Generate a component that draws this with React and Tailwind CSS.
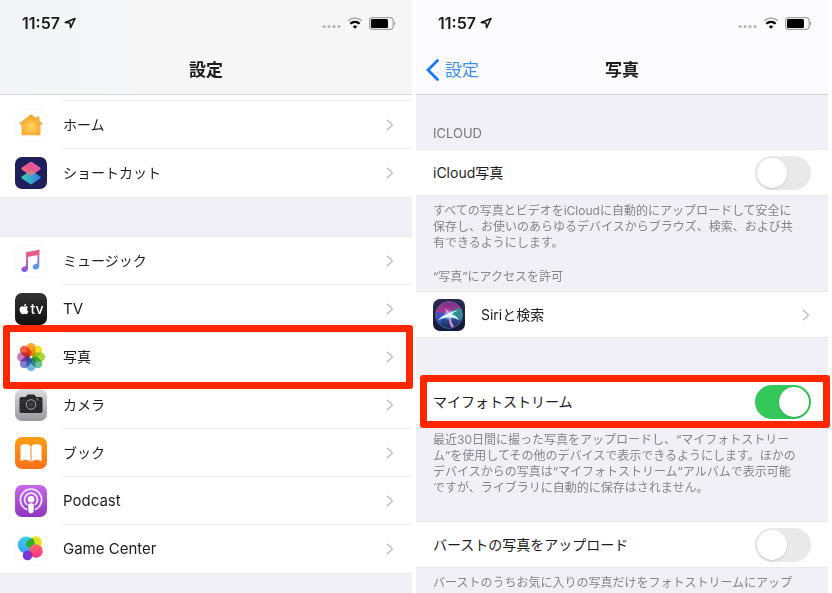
import { FaApple } from 'react-icons/fa'
import clsx from 'clsx'

function HomeIcon() {
  return (
    <svg viewBox="0 0 32 32" className="size-8">
      <defs>
        <radialGradient id="home" cx="50%" cy="60%" r="55%">
          <stop offset="0" stopColor="#ffd75e" />
          <stop offset="1" stopColor="#f99d2b" />
        </radialGradient>
      </defs>
      <rect x=".5" y=".5" width="31" height="31" rx="7" fill="#fefefe" stroke="#f8f8f8" />
      <path
        d="M16 5.200 21.600 9.600V8.200c0-.5.3-.8.8-.8h1.200c.5 0 .8.3.8.8v3.700l2.800 2.200c.7.6.4 1.300-.4 1.300h-1.300v9.300c0 1-.6 1.600-1.600 1.600H8.100c-1 0-1.600-.6-1.600-1.600v-9.300H5.200c-.8 0-1.100-.7-.4-1.300z"
        fill="url(#home)"
      />
    </svg>
  )
}

function ShortcutsIcon() {
  return (
    <svg viewBox="0 0 32 32" className="size-8">
      <defs>
        <linearGradient id="scTop" x1="1" y1="0" x2="0" y2="1">
          <stop offset="0" stopColor="#d85adf" />
          <stop offset=".5" stopColor="#ea5585" />
          <stop offset="1" stopColor="#f07a78" />
        </linearGradient>
        <linearGradient id="scBottom" x1="0" y1="0" x2="1" y2="0">
          <stop offset="0" stopColor="#3fd0b4" />
          <stop offset="1" stopColor="#2c7de8" />
        </linearGradient>
      </defs>
      <rect width="32" height="32" rx="7" fill="#1f1f5c" />
      <path
        d="M7 19.600c-.9.5-.9 1.300 0 1.800l7.600 5.400c1 .7 1.900.7 2.800 0l7.600-5.400c.9-.5.9-1.300 0-1.800L18 14.600c-1.200-.8-2.800-.8-4 0z"
        fill="url(#scBottom)"
      />
      <path
        d="M14.600 5.200 7 10.600c-.9.5-.9 1.500 0 2.100l7.600 5.400c1 .7 1.900.7 2.800 0l7.600-5.400c.9-.6.9-1.600 0-2.100l-7.600-5.400c-.9-.7-1.800-.7-2.800 0z"
        fill="url(#scTop)"
      />
      <path d="m16 13.600 5 2-3.600 2.500c-.9.6-1.900.6-2.800 0L11 15.600z" fill="#a99aa0" opacity=".6" />
    </svg>
  )
}

function MusicIcon() {
  return (
    <svg viewBox="0 0 32 32" className="size-8">
      <defs>
        <linearGradient id="music" x1="0" y1="0" x2="0" y2="1">
          <stop offset="0" stopColor="#f9567c" />
          <stop offset=".35" stopColor="#d85ba6" />
          <stop offset="1" stopColor="#7d55ea" />
        </linearGradient>
        <linearGradient id="musicRight" x1="0" y1="0" x2="0" y2="1">
          <stop offset="0" stopColor="#f9567c" />
          <stop offset=".5" stopColor="#9d79d8" />
          <stop offset="1" stopColor="#3fa4ee" />
        </linearGradient>
      </defs>
      <rect x=".5" y=".5" width="31" height="31" rx="7" fill="#fefefe" stroke="#f7f7f7" />
      <path d="M11.100 7.200 24.300 4.700v5L11.100 12.200z" fill="#ea5a86" />
      <path
        d="M11.100 7.200h1.900V23c0 2.600-1.500 3.900-3.600 3.900-1.900 0-3-1-3-2.500 0-1.700 1.300-2.500 3-2.800 1.300-.2 1.700-.5 1.700-1.500z"
        fill="url(#music)"
      />
      <path
        d="M22.400 5.100l1.900-.4v15.800c0 2.600-1.500 3.900-3.600 3.900-1.900 0-3-1-3-2.500 0-1.700 1.300-2.500 3-2.800 1.300-.2 1.700-.5 1.700-1.500z"
        fill="url(#musicRight)"
      />
    </svg>
  )
}

function TvIcon() {
  return (
    <span className="flex size-8 items-center justify-center rounded-[7px] bg-linear-to-b from-[#333] to-[#111] text-white">
      <FaApple className="size-3" />
      <span className="text-sm leading-4 font-medium">tv</span>
    </span>
  )
}

const petals = ['#fba62a', '#f2e02a', '#a5d83c', '#66c490', '#72b4e0', '#8480cc', '#c87cc0', '#f4604c']

function PhotosIcon() {
  return (
    <svg viewBox="0 0 32 32" className="size-8">
      <rect width="32" height="32" rx="7" fill="#fff" />
      {petals.map((color, i) => (
        <rect
          key={color}
          x="11.500"
          y="2"
          width="9"
          height="13"
          rx="4.500"
          fill={color}
          transform={`rotate(${i * 45} 16 16)`}
          className="mix-blend-multiply"
        />
      ))}
    </svg>
  )
}

function CameraIcon() {
  return (
    <svg viewBox="0 0 32 32" className="size-8">
      <defs>
        <linearGradient id="camera" x1="0" y1="0" x2="0" y2="1">
          <stop offset="0" stopColor="#dcdcde" />
          <stop offset="1" stopColor="#98989e" />
        </linearGradient>
      </defs>
      <rect width="32" height="32" rx="7" fill="url(#camera)" />
      <path
        d="M6.500 8h4.300l1.400-1.900c.3-.4.7-.6 1.200-.6h5.200c.5 0 .9.2 1.200.6L21.200 8h4.300c1.300 0 2 .8 2 2v12c0 1.200-.8 2-2 2h-19c-1.300 0-2-.8-2-2V10c0-1.200.7-2 2-2z"
        fill="#2b2b2e"
      />
      <path d="M4.500 11.500h23" stroke="#4a4a4d" strokeWidth=".6" />
      <circle cx="16" cy="15.500" r="6" fill="#2b2b2e" />
      <circle cx="16" cy="15.500" r="4.800" fill="none" stroke="#a8a8aa" strokeWidth="1" />
      <circle cx="16" cy="15.500" r="2.500" fill="#3d3d40" />
      <circle cx="22.500" cy="10" r=".8" fill="#e3b737" />
    </svg>
  )
}

function BooksIcon() {
  return (
    <svg viewBox="0 0 32 32" className="size-8">
      <defs>
        <linearGradient id="books" x1="0" y1="0" x2="0" y2="1">
          <stop offset="0" stopColor="#fe9f12" />
          <stop offset="1" stopColor="#f8701a" />
        </linearGradient>
      </defs>
      <rect width="32" height="32" rx="7" fill="url(#books)" />
      <path
        d="M15.500 9.200v15.500c-2.600-2.500-6.500-2.800-10-.4V9.900c0-1 .3-1.500 1.100-1.900 3-1.600 6.700-1.300 8.900 1.200zM16.500 9.200v15.500c2.600-2.500 6.500-2.800 10-.4V9.900c0-1-.3-1.500-1.100-1.900-3-1.600-6.700-1.300-8.900 1.200z"
        fill="#fff"
      />
    </svg>
  )
}

function PodcastIcon() {
  return (
    <svg viewBox="0 0 32 32" className="size-8">
      <defs>
        <linearGradient id="podcast" x1="0" y1="0" x2="0" y2="1">
          <stop offset="0" stopColor="#c768e8" />
          <stop offset="1" stopColor="#8f35c0" />
        </linearGradient>
      </defs>
      <rect width="32" height="32" rx="7" fill="url(#podcast)" />
      <g fill="none" stroke="#f5e6fa" strokeWidth="1.800" strokeLinecap="round">
        <path d="M11.500 24.300a10.600 10.600 0 1 1 9 0" />
        <path d="M11.800 19.500a6.500 6.500 0 1 1 8.400 0" />
      </g>
      <circle cx="16" cy="14.300" r="3.300" fill="#fff" />
      <path
        d="M16 18.200c2 0 3 .8 2.900 2.400l-.4 5.800c-.2 1.200-1.100 1.800-2.500 1.800s-2.300-.6-2.500-1.800l-.4-5.800c-.1-1.600.9-2.400 2.900-2.400z"
        fill="#fff"
      />
    </svg>
  )
}

function GameCenterIcon() {
  return (
    <svg viewBox="0 0 32 32" className="size-8">
      <defs>
        <linearGradient id="gcBlue" x1="0" y1="0" x2="0" y2="1">
          <stop offset="0" stopColor="#3fd0e8" />
          <stop offset="1" stopColor="#3a9bf5" />
        </linearGradient>
        <linearGradient id="gcPink" x1="0" y1="0" x2="0" y2="1">
          <stop offset="0" stopColor="#ff6b6b" />
          <stop offset="1" stopColor="#fc2f86" />
        </linearGradient>
      </defs>
      <rect x=".5" y=".5" width="31" height="31" rx="7" fill="#fff" stroke="#f8f8f8" />
      <circle cx="20.500" cy="9.800" r="6.500" fill="#e9e11c" />
      <circle cx="11.200" cy="12" r="8.400" fill="url(#gcBlue)" />
      <path d="M18 5.500c2 3 2.200 6.500.8 9.500-3.500 1.500-7-.5-8-3.500.5-4 4-6.200 7.200-6z" fill="#2fae2f" />
      <circle cx="21" cy="18" r="6.800" fill="url(#gcPink)" />
      <circle cx="12.500" cy="22.500" r="4.800" fill="#7a35d8" />
      <path d="M15.200 18.600a6.800 6.800 0 0 0 2 5.100 4.800 4.800 0 0 0-2-5.100z" fill="#c2185b" />
    </svg>
  )
}

function SiriIcon() {
  return (
    <svg viewBox="0 0 32 32" className="size-8">
      <defs>
        <linearGradient id="siriBg" x1="0" y1="0" x2="0" y2="1">
          <stop offset="0" stopColor="#2b2a4c" />
          <stop offset="1" stopColor="#10183c" />
        </linearGradient>
        <linearGradient id="siriOrb" x1="0" y1="0" x2="0" y2="1">
          <stop offset="0" stopColor="#7a2f86" />
          <stop offset=".4" stopColor="#a8398f" />
          <stop offset=".65" stopColor="#28508f" />
          <stop offset="1" stopColor="#142a5c" />
        </linearGradient>
        <radialGradient id="siriGlow" cx="50%" cy="50%" r="50%">
          <stop offset="0" stopColor="#fff" />
          <stop offset=".3" stopColor="#d6f5ff" stopOpacity=".7" />
          <stop offset="1" stopColor="#6fd8ff" stopOpacity="0" />
        </radialGradient>
      </defs>
      <rect width="32" height="32" rx="7" fill="url(#siriBg)" />
      <circle cx="16" cy="16" r="13.500" fill="url(#siriOrb)" stroke="#6d7bb0" strokeWidth=".6" />
      <path d="M16 16C10 13 5 12 2.800 14c-.3 4 1.200 8 4.200 11 2-4 5-7 9-9z" fill="#3457c8" opacity=".75" />
      <path d="M16 16c3-5 8-7.500 12.300-6 1.500 3.500 1.500 8 .2 11.500C25 18 20.500 16 16 16z" fill="#249a94" opacity=".85" />
      <path d="M16 16c-.5 4.500.3 9 2.500 12.500 1-.2 1.800-.5 2.500-.9C19 24.500 17.600 20 16 16z" fill="#e78ad8" />
      <path d="M16 14.500c-4 .8-8 3-11 6.800 4-2 8-3 11-2.800 3.500-.2 7.500.8 10.500 3-2-3.500-5-5.800-8-6.300 2-1.600 4-2.900 6.200-3.700-3.600.2-6.200 1.200-8.700 3z" fill="#dff8ff" />
      <path d="M12 9c1.800 1.500 3.500 3.500 4.200 6C14 13.800 12.500 11.800 12 9z" fill="#ff8fc8" />
      <circle cx="16.200" cy="16" r="6" fill="url(#siriGlow)" />
    </svg>
  )
}

function Chevron() {
  return (
    <svg viewBox="0 0 8 12" className="h-3 w-2 shrink-0" fill="none" stroke="#c4c4c7" strokeWidth="1.600">
      <path d="m1 .8 5.500 5.200L1 11.200" />
    </svg>
  )
}

function StatusBar() {
  return (
    <div className="flex h-[46px] items-center justify-between pr-4 pl-[22px]">
      <div className="flex items-center gap-1">
        <span className="text-base leading-5 font-semibold">11:57</span>
        <svg viewBox="0 0 12 12" className="size-3" fill="none" stroke="#111" strokeWidth="1.500" strokeLinejoin="round">
          <path d="M11 1.500 1.200 5.500 6 6l.6 4.800z" />
        </svg>
      </div>
      <div className="flex items-center gap-1.5">
        <svg viewBox="0 0 19 12" className="h-3 w-[19px]" fill="#b5b5b8">
          <circle cx="2" cy="9.500" r="1.600" />
          <circle cx="7" cy="9.500" r="1.600" />
          <circle cx="12" cy="9.500" r="1.600" />
          <circle cx="17" cy="9.500" r="1.600" />
        </svg>
        <svg viewBox="0 0 15 12" className="h-3 w-4" fill="none">
          <path d="M.8 3.800a9.600 9.600 0 0 1 13.400 0" stroke="#b0b0b3" strokeWidth="1.800" />
          <path d="M2.900 6.700a6.500 6.500 0 0 1 9.200 0" stroke="#000" strokeWidth="2.300" />
          <path d="M7.500 11.800 5.300 9.500a3.200 3.200 0 0 1 4.400 0z" fill="#000" />
        </svg>
        <svg viewBox="0 0 27 13" className="h-[13px] w-[27px]">
          <rect x=".6" y=".6" width="23.600" height="11.800" rx="3.200" fill="none" stroke="#a2a2a5" strokeWidth="1.200" />
          <rect x="2" y="2" width="17" height="9" rx="1.500" fill="#000" />
          <path d="M25.200 4.500c1.600.6 1.600 3.400 0 4z" fill="#a2a2a5" />
        </svg>
      </div>
    </div>
  )
}

function Highlight({ className }) {
  return <span className={clsx('pointer-events-none absolute z-10 rounded-[3px] border-[7px] border-[#ff2600]', className)} />
}

function AppRow({ icon: Icon, label, latin, highlighted, divider }) {
  return (
    <li className="relative">
      <a href="#" className="flex h-12 items-center gap-4 pl-[15px]">
        <Icon />
        <span
          className={clsx(
            'flex h-full flex-1 items-center justify-between border-b pr-[18px]',
            latin && 'text-[15px]',
            divider && !highlighted ? 'border-[#ececee]' : 'border-transparent'
          )}
        >
          {label}
          <Chevron />
        </span>
      </a>
      {highlighted && <Highlight className="-top-2 -right-px -bottom-2 left-[3px]" />}
    </li>
  )
}

function AppList({ items }) {
  return (
    <ul>
      {items.map((item, i) => (
        <AppRow key={item.label} {...item} divider={i < items.length - 1} />
      ))}
    </ul>
  )
}

function SwitchRow({ id, label, defaultChecked, highlighted }) {
  return (
    <div className="relative flex h-[47px] items-center justify-between border-y border-[#e9e9ed] bg-white px-[17px]">
      <label htmlFor={id}>{label}</label>
      <input
        id={id}
        type="checkbox"
        role="switch"
        defaultChecked={defaultChecked}
        className="flex h-[34px] w-14 appearance-none items-center rounded-full bg-[#e9e9ea] p-0.5 before:size-[30px] before:rounded-full before:bg-white before:shadow-sm checked:justify-end checked:bg-[#34c759]"
      />
      {highlighted && <Highlight className="-top-1 -right-0.5 -bottom-1 left-1" />}
    </div>
  )
}

function Note({ lines, className }) {
  return (
    <p className={clsx('px-[17px] text-xs leading-4 whitespace-nowrap text-[#85858b]', className)}>
      {lines.map((line) => (
        <span key={line} className="block">
          {line}
        </span>
      ))}
    </p>
  )
}

const systemApps = [
  { icon: HomeIcon, label: 'ホーム' },
  { icon: ShortcutsIcon, label: 'ショートカット' },
]

const mediaApps = [
  { icon: MusicIcon, label: 'ミュージック' },
  { icon: TvIcon, label: 'TV', latin: true },
  { icon: PhotosIcon, label: '写真', highlighted: true },
  { icon: CameraIcon, label: 'カメラ' },
  { icon: BooksIcon, label: 'ブック' },
  { icon: PodcastIcon, label: 'Podcast', latin: true },
  { icon: GameCenterIcon, label: 'Game Center', latin: true },
]

function SettingsScreen() {
  return (
    <section className="min-w-0 flex-1 bg-[#f1f0f6]">
      <header className="border-b border-[#d9d9db] bg-linear-to-r from-[#f2f5f8] to-[#f6f6f6] to-40%">
        <StatusBar />
        <h1 className="flex h-12 items-center justify-center text-[17px] font-bold">設定</h1>
      </header>
      <div className="border-b border-[#e9e9ed] bg-white">
        <div className="ml-[63px] h-1.5 border-b border-[#ececee]" />
        <AppList items={systemApps} />
      </div>
      <div className="mt-[38px] border-y border-[#e9e9ed] bg-white">
        <AppList items={mediaApps} />
      </div>
    </section>
  )
}

function PhotosScreen() {
  return (
    <section className="min-w-0 flex-1 bg-[#f1f0f6]">
      <header className="border-b border-[#cfcfd2] bg-[#fbfbfd]">
        <StatusBar />
        <div className="grid h-12 grid-cols-3 items-center text-[17px]">
          <a href="#" className="flex items-center gap-1.5 pl-2.5 text-[#3a8df0]">
            <svg viewBox="0 0 13 22" className="h-[22px] w-[13px]" fill="none" stroke="#1479f5" strokeWidth="2.800" strokeLinecap="round">
              <path d="M11.500 1.500 2 11l9.500 9.500" />
            </svg>
            設定
          </a>
          <h1 className="text-center font-bold">写真</h1>
        </div>
      </header>
      <h2 className="px-[17px] pt-[30px] pb-2 text-[13px] leading-4 text-[#77777c]">ICLOUD</h2>
      <SwitchRow id="icloud" label="iCloud写真" />
      <Note
        className="pt-[7px]"
        lines={[
          'すべての写真とビデオをiCloudに自動的にアップロードして安全に',
          '保存し、お使いのあらゆるデバイスからブラウズ、検索、および共',
          '有できるようにします。',
        ]}
      />
      <Note className="pt-[18px] pb-1.5" lines={['“写真”にアクセスを許可']} />
      <a
        href="#"
        className="flex h-[47px] items-center gap-4 border-y border-[#e9e9ed] bg-white pr-[18px] pl-[17px]"
      >
        <SiriIcon />
        <span className="flex-1">Siriと検索</span>
        <Chevron />
      </a>
      <div className="h-10" />
      <SwitchRow id="stream" label="マイフォトストリーム" defaultChecked highlighted />
      <Note
        className="pt-[7px] pb-[25px]"
        lines={[
          '最近30日間に撮った写真をアップロードし、“マイフォトストリー',
          'ム”を使用してその他のデバイスで表示できるようにします。ほかの',
          'デバイスからの写真は“マイフォトストリーム”アルバムで表示可能',
          'ですが、ライブラリに自動的に保存はされません。',
        ]}
      />
      <SwitchRow id="burst" label="バーストの写真をアップロード" />
      <Note className="pt-[7px]" lines={['バーストのうちお気に入りの写真だけをフォトストリームにアップ']} />
    </section>
  )
}

export default function App() {
  return (
    <main
      lang="ja"
      className="flex h-screen gap-1 overflow-hidden bg-white pr-1 font-['Inter','Noto_Sans_CJK_JP',sans-serif] text-sm text-[#1c1c1e]"
    >
      <SettingsScreen />
      <PhotosScreen />
    </main>
  )
}
